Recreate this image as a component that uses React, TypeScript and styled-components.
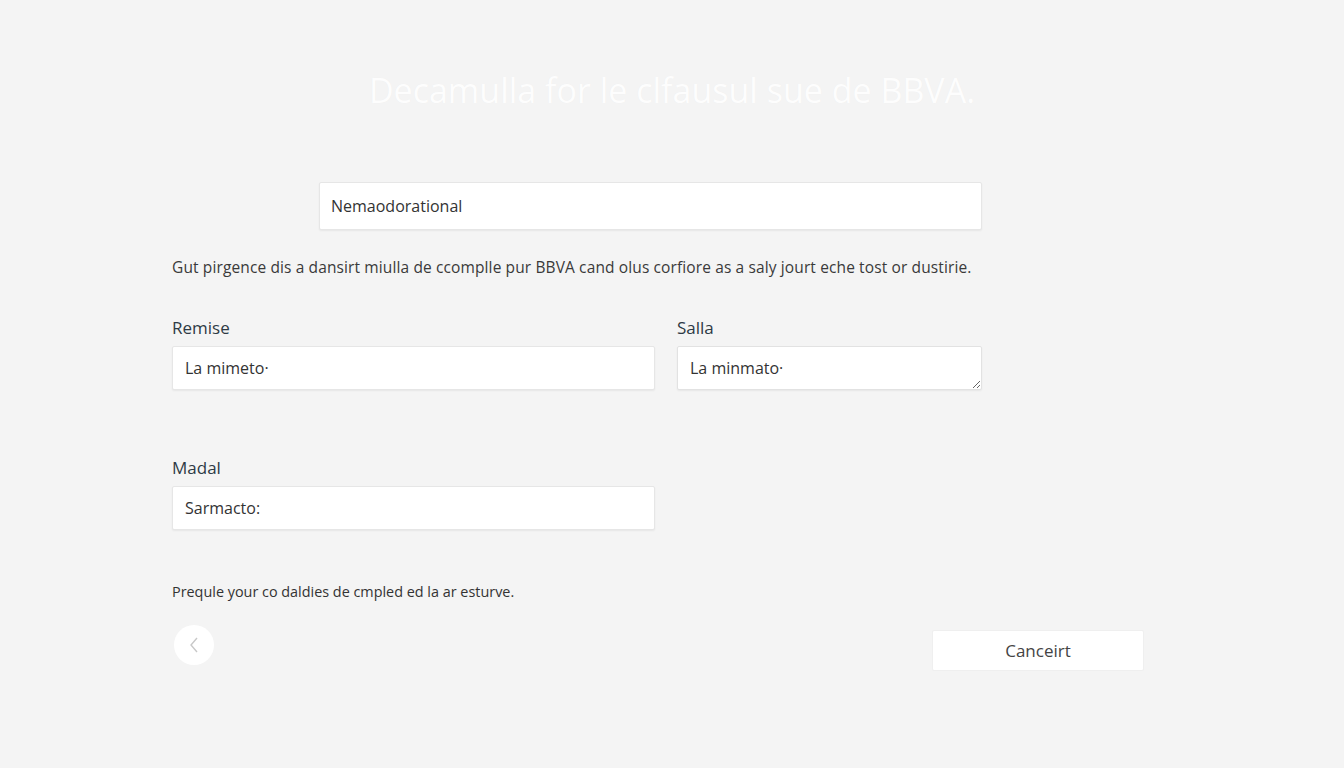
import * as React from 'react';
import styled, { createGlobalStyle } from 'styled-components';

const GlobalStyle = createGlobalStyle`
    html, body {
        margin: 0;
        padding: 0;
        background: #f4f4f4;
    }
    body {
        font-family: 'Open Sans', 'Noto Sans', sans-serif;
        color: #333;
    }
`;

const Page = styled.div`
    width: 1344px;
    height: 768px;
    box-sizing: border-box;
    padding-top: 66px;
    background: #f4f4f4;
`;

const Title = styled.h1`
    margin: 0;
    text-align: center;
    font-size: 34px;
    font-weight: 400;
    line-height: 48px;
    color: #fdfdfd;
    text-shadow: 0 0 1px rgba(0, 0, 0, 0.04);
`;

const Main = styled.main`
    width: 810px;
    margin-left: 172px;
    margin-top: 68px;
`;

const TopRow = styled.div`
    display: flex;
    justify-content: flex-end;
`;

const TextInput = styled.input<{ $width?: number }>`
    box-sizing: border-box;
    width: ${(p) => (p.$width ? `${p.$width}px` : '100%')};
    height: ${(p) => (p.$width ? '48px' : '44px')};
    padding: 0 12px 0 ${(p) => (p.$width ? '11px' : '12px')};
    border: 1px solid #e6e6e6;
    border-radius: 2px;
    background: #fff;
    box-shadow: 0 1px 2px rgba(0, 0, 0, 0.06);
    font-family: inherit;
    font-size: 16px;
    color: #333;
    outline: none;
`;

const TextArea = styled.textarea`
    box-sizing: border-box;
    width: 100%;
    height: 44px;
    padding: 11px 12px 0;
    border: 1px solid #e2e2e2;
    border-radius: 2px;
    background: #fff;
    box-shadow: 0 1px 2px rgba(0, 0, 0, 0.06);
    font-family: inherit;
    font-size: 16px;
    line-height: 20px;
    color: #333;
    resize: both;
    overflow: hidden;
    outline: none;
`;

const Intro = styled.p`
    margin: 26px 0 0;
    font-size: 15.5px;
    line-height: 22px;
    letter-spacing: 0.12px;
    white-space: nowrap;
    color: #3a3a3a;
`;

const FieldGrid = styled.div`
    display: grid;
    grid-template-columns: 483px 305px;
    column-gap: 22px;
    row-gap: 66px;
    margin-top: 38px;
`;

const Field = styled.label`
    display: flex;
    flex-direction: column;
    gap: 6px;
`;

const Label = styled.span`
    font-size: 17px;
    line-height: 24px;
    color: #2e3a45;
`;

const Note = styled.p`
    margin: 51px 0 0;
    font-size: 14.4px;
    line-height: 22px;
    color: #333;
`;

const Footer = styled.div`
    display: flex;
    justify-content: space-between;
    align-items: center;
    width: 972px;
    margin-left: 172px;
    margin-top: 16px;
`;

const BackButton = styled.button`
    width: 40px;
    height: 40px;
    border-radius: 50%;
    border: none;
    background: #fff;
    display: flex;
    align-items: center;
    justify-content: center;
    padding: 0;
    margin-left: 2px;
    cursor: pointer;
`;

const CancelButton = styled.button`
    width: 212px;
    height: 41px;
    margin-top: 11px;
    border: 1px solid #efefef;
    border-radius: 2px;
    background: #fff;
    font-family: inherit;
    font-size: 17px;
    color: #444;
    cursor: pointer;
`;

const App: React.FunctionComponent = () => {
    return (
        <Page>
            <GlobalStyle />
            <Title>Decamulla for le clfausul sue de BBVA.</Title>
            <Main>
                <TopRow>
                    <TextInput $width={663} defaultValue="Nemaodorational" />
                </TopRow>
                <Intro>
                    Gut pirgence dis a dansirt miulla de ccomplle pur BBVA cand olus corfiore as a saly jourt
                    eche tost or dustirie.
                </Intro>
                <FieldGrid>
                    <Field>
                        <Label>Remise</Label>
                        <TextInput defaultValue="La mimeto·" />
                    </Field>
                    <Field>
                        <Label>Salla</Label>
                        <TextArea defaultValue="La minmato·" />
                    </Field>
                    <Field>
                        <Label>Madal</Label>
                        <TextInput defaultValue="Sarmacto:" />
                    </Field>
                </FieldGrid>
                <Note>Prequle your co daldies de cmpled ed la ar esturve.</Note>
            </Main>
            <Footer>
                <BackButton aria-label="Retour">
                    <svg width="14" height="18" viewBox="0 0 14 18" fill="none">
                        <path d="M10 2 L4 9 L10 16" stroke="#c8c8c8" strokeWidth="1.4" />
                    </svg>
                </BackButton>
                <CancelButton>Canceirt</CancelButton>
            </Footer>
        </Page>
    );
};

export default App;
